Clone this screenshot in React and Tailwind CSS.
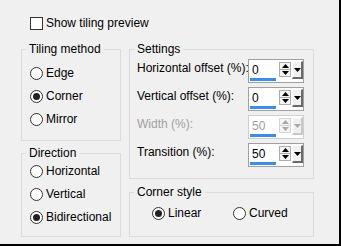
import React from "react";

const Radio = ({ checked }) => (
  <span className="w-[13px] h-[13px] rounded-full border border-[#333333] bg-white flex items-center justify-center shrink-0">
    {checked && <span className="w-[7px] h-[7px] rounded-full bg-[#222222]" />}
  </span>
);

const RadioRow = ({ label, checked }) => (
  <label className="flex items-center gap-[3px] h-[14px] whitespace-nowrap">
    <Radio checked={checked} />
    <span>{label}</span>
  </label>
);

const Arrow = ({ dir, disabled }) => (
  <svg width="7" height="4" viewBox="0 0 7 4" className="block">
    <path
      d={dir === "up" ? "M0 4 L3.5 0 L7 4 Z" : "M0 0 L7 0 L3.5 4 Z"}
      fill={disabled ? "#a8a8a8" : "#000000"}
    />
  </svg>
);

// numeric field with spin arrows and a drop button
const Spinner = ({ value, disabled }) => (
  <div
    className={`w-[56px] h-[24px] border bg-white flex ${
      disabled ? "border-[#cfcfcf]" : "border-[#a0a0a0]"
    }`}
  >
    <div className="w-[30px] flex flex-col">
      <span
        className={`h-[18px] pl-[3px] pt-[3px] leading-[14px] ${
          disabled ? "text-[#a0a0a0]" : "text-black"
        }`}
      >
        {value}
      </span>
      <span className="ml-[1px] w-[26px] h-[3px] bg-[#3a8ee6]" />
    </div>
    <div className="mt-[2px] flex flex-col w-[12px]">
      <span
        className={`h-[8px] border flex items-center justify-center bg-[#f4f4f4] ${
          disabled ? "border-[#d4d4d4]" : "border-[#adadad]"
        }`}
      >
        <Arrow dir="up" disabled={disabled} />
      </span>
      <span
        className={`h-[7px] border border-t-0 flex items-center justify-center bg-[#f4f4f4] ${
          disabled ? "border-[#d4d4d4]" : "border-[#adadad]"
        }`}
      >
        <Arrow dir="down" disabled={disabled} />
      </span>
    </div>
    <div
      className={`ml-[1px] mt-[1px] w-[11px] h-[18px] flex items-center justify-center bg-[#f0f0f0] border-t border-l border-t-white border-l-white border-r-2 border-b-2 ${
        disabled ? "border-r-[#c8c8c8] border-b-[#c8c8c8]" : "border-r-[#6a6a6a] border-b-[#6a6a6a]"
      }`}
    >
      <Arrow dir="down" disabled={disabled} />
    </div>
  </div>
);

const SettingRow = ({ label, value, disabled }) => (
  <div className="flex items-start h-[24px]">
    <span className={`w-[111px] pt-[2px] whitespace-nowrap ${disabled ? "text-[#a0a0a0]" : ""}`}>
      {label}
    </span>
    <Spinner value={value} disabled={disabled} />
  </div>
);

const Group = ({ title, className, children }) => (
  <fieldset className={`border border-[#dcdcdc] p-0 m-0 ${className}`}>
    <legend className="ml-[4px] px-[3px] leading-[14px]">{title}</legend>
    {children}
  </fieldset>
);

const App = () => {
  return (
    <div className="w-[341px] h-[246px] bg-[#f0f0f0] border-r-2 border-b-2 border-black text-[12px] leading-[14px] text-black font-['Liberation_Sans',Arial,sans-serif]">
      {/* Preview toggle */}
      <label className="pt-[16px] pl-[30px] flex items-center gap-[3px]">
        <span className="w-[13px] h-[13px] border border-[#333333] bg-white shrink-0" />
        <span>Show tiling preview</span>
      </label>

      <div className="flex gap-[8px] pl-[21px] mt-[12px]">
        {/* Left column */}
        <div className="w-[100px] flex flex-col gap-[5px]">
          <Group title="Tiling method" className="h-[99px]">
            <div className="pl-[8px] pt-[10px] flex flex-col gap-[9px]">
              <RadioRow label="Edge" />
              <RadioRow label="Corner" checked />
              <RadioRow label="Mirror" />
            </div>
          </Group>
          <Group title="Direction" className="h-[91px]">
            <div className="pl-[8px] pt-[4px] flex flex-col gap-[9px]">
              <RadioRow label="Horizontal" />
              <RadioRow label="Vertical" />
              <RadioRow label="Bidirectional" checked />
            </div>
          </Group>
        </div>

        {/* Right column */}
        <div className="w-[185px] flex flex-col gap-[6px]">
          <Group title="Settings" className="h-[137px]">
            <div className="pl-[7px] pt-[3px] flex flex-col gap-[4px]">
              <SettingRow label="Horizontal offset (%):" value="0" />
              <SettingRow label="Vertical offset (%):" value="0" />
              <SettingRow label="Width (%):" value="50" disabled />
              <SettingRow label="Transition (%):" value="50" />
            </div>
          </Group>
          <Group title="Corner style" className="h-[52px]">
            <div className="pl-[22px] pt-[7px] flex">
              <div className="w-[81px]">
                <RadioRow label="Linear" checked />
              </div>
              <RadioRow label="Curved" />
            </div>
          </Group>
        </div>
      </div>
    </div>
  );
};

export default App;
